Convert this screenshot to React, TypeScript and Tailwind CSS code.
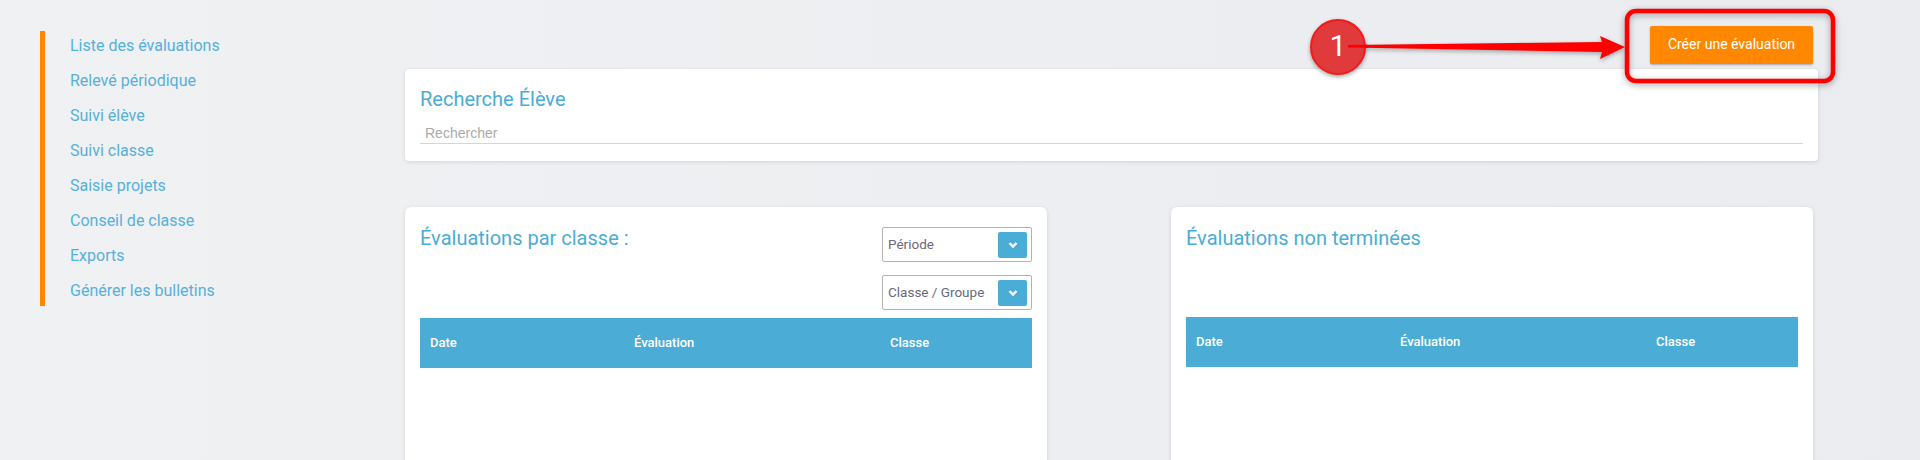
const navItems = [
  'Liste des évaluations',
  'Relevé périodique',
  'Suivi élève',
  'Suivi classe',
  'Saisie projets',
  'Conseil de classe',
  'Exports',
  'Générer les bulletins',
];

const Select = ({ label }: { label: string }) => (
  <div className="flex h-[35px] w-[150px] items-center justify-between rounded-[2px] border border-[#b3b3b3] bg-white pl-[5px] pr-1 text-[13.5px] text-[#69697a]">
    <span>{label}</span>
    <span className="flex h-[26px] w-[29px] items-center justify-center rounded-[2px] bg-[#4bacd5]">
      <svg width="10" height="8" viewBox="0 0 10 8" fill="none" stroke="white" strokeWidth="2.4">
        <path d="M1.5 2 L5 5.5 L8.5 2" />
      </svg>
    </span>
  </div>
);

const TableHead = () => (
  <div className="flex h-[50px] items-center bg-[#4bacd5] text-[13px] font-medium text-white">
    <div className="w-[204px] pl-2.5">Date</div>
    <div className="w-[256px] pl-2.5">Évaluation</div>
    <div className="pl-2.5">Classe</div>
  </div>
);

export default function App() {
  return (
    <div className="relative flex h-[460px] w-[1920px] overflow-hidden bg-gradient-to-r from-[#f0f1f3] to-[#ebecf0] font-['Roboto',sans-serif]">
      {/* Sidebar */}
      <div className="w-[405px] shrink-0 pl-10 pt-[31px]">
        <ul className="flex h-[275px] flex-col gap-[7px] border-l-[5px] border-[#ff8800] pl-[25px] pt-px text-[16px] text-[#56b0dc]">
          {navItems.map((item) => (
            <li key={item} className="leading-[28px]">
              {item}
            </li>
          ))}
        </ul>
      </div>

      {/* Main */}
      <div className="w-[1413px] shrink-0">
        <div className="flex h-[69px] items-start justify-end pr-[5px] pt-[26px]">
          <button className="h-[38px] w-[163px] rounded-[2px] bg-[#ff8800] pb-[2px] text-[14px] text-white shadow-[0_1px_2px_rgba(0,0,0,0.3)]">
            Créer une évaluation
          </button>
        </div>

        <div className="h-[92px] rounded-[4px] bg-white px-[15px] pt-[17px] shadow-[0_1px_4px_rgba(0,0,0,0.12)]">
          <h2 className="text-[20px] leading-[26px] text-[#4bacd5]">Recherche Élève</h2>
          <div className="mt-[4px] h-[28px] border-b border-[#d5d5d5] pl-[5px] pt-[8px] font-['Liberation_Sans',sans-serif] text-[14px] leading-[18px] text-[#aaaaaa]">
            Rechercher
          </div>
        </div>

        <div className="mt-[46px] flex gap-[124px]">
          <div className="h-[300px] w-[642px] rounded-[6px] bg-white px-[15px] pt-[20px] shadow-[0_1px_4px_rgba(0,0,0,0.12)]">
            <div className="flex h-[91px] justify-between">
              <h2 className="-mt-[2px] text-[20px] leading-[26px] text-[#4bacd5]">Évaluations par classe :</h2>
              <div className="flex flex-col gap-[13px]">
                <Select label="Période" />
                <Select label="Classe / Groupe" />
              </div>
            </div>
            <TableHead />
          </div>

          <div className="h-[300px] w-[642px] rounded-[6px] bg-white px-[15px] pt-[18px] shadow-[0_1px_4px_rgba(0,0,0,0.12)]">
            <h2 className="h-[92px] text-[20px] leading-[26px] text-[#4bacd5]">Évaluations non terminées</h2>
            <TableHead />
          </div>
        </div>
      </div>

      {/* Annotation over the button */}
      <svg className="pointer-events-none absolute left-0 top-0" width="1920" height="460" fill="none">
        <rect x="1627" y="11" width="206" height="70" rx="9" stroke="#ff0000" strokeWidth="4.5" style={{ filter: 'drop-shadow(0 2px 3px rgba(0,0,0,0.35))' }} />
        <path d="M1348 45 L1602 42 L1600 36 L1625 47 L1600 59 L1602 52 L1348 47.5 Z" fill="#ff0000" style={{ filter: 'drop-shadow(0 2px 2px rgba(0,0,0,0.3))' }} />
      </svg>
      <div className="absolute left-[1310px] top-[19px] flex h-[56px] w-[56px] items-center justify-center rounded-full border-2 border-[#f01c1c] bg-[#e03a3c] pb-[4px] text-[30px] text-white shadow-[0_2px_4px_rgba(0,0,0,0.35)]">
        1
      </div>
      <svg className="pointer-events-none absolute left-[1348px] top-[40px]" width="20" height="10">
        <path d="M0 5 L20 4.7 L20 7.7 L0 7.5 Z" fill="#ff0000" />
      </svg>
    </div>
  );
}
